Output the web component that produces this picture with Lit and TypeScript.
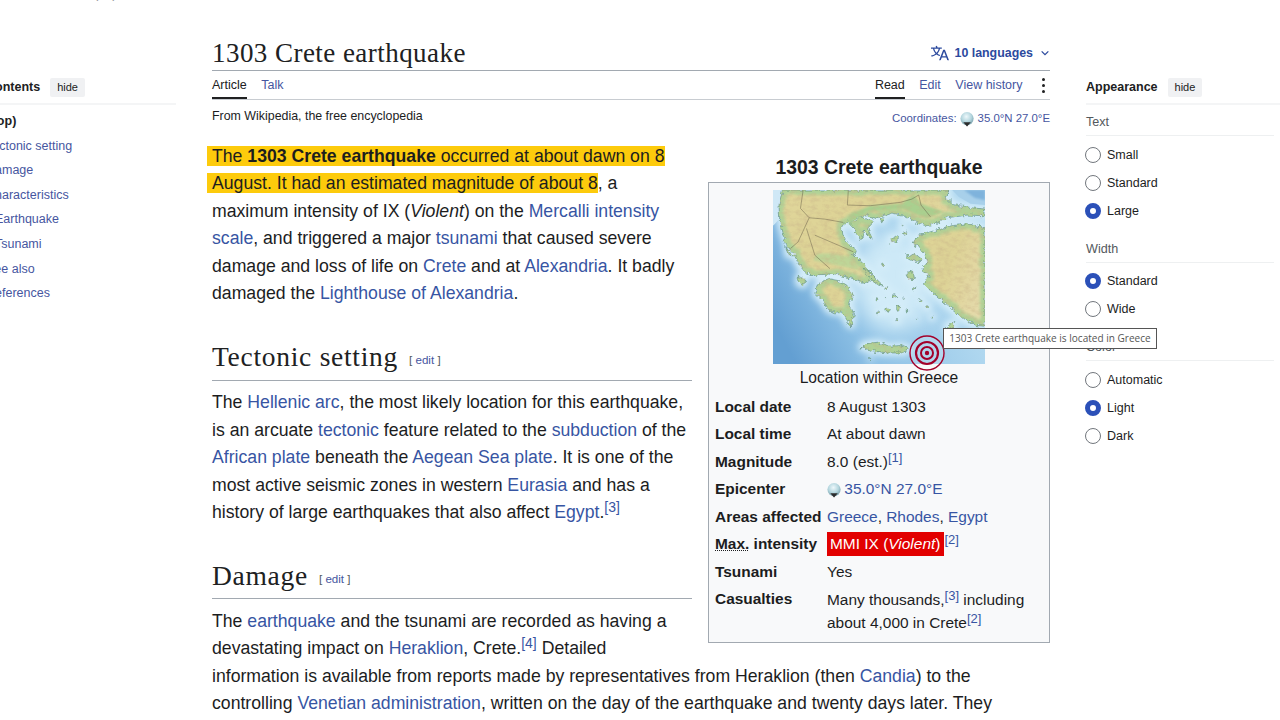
import { LitElement, html, css, svg } from "lit";
import { customElement } from "lit/decorators.js";

const radio = (label: string, on = false) => html`
  <div class="opt"><span class="radio ${on ? "on" : ""}"></span><span>${label}</span></div>`;

const globe = html`<svg class="globe" viewBox="0 0 16 16" width="15" height="15">
  <defs><radialGradient id="gl" cx="45%" cy="35%" r="65%"><stop offset="0" stop-color="#eef8fb"/><stop offset=".6" stop-color="#b4d6de"/><stop offset="1" stop-color="#7ba3ae"/></radialGradient></defs>
  <circle cx="7.5" cy="7" r="7" fill="url(#gl)"/>
  <path d="M3.5 11h8L7.5 15.5z" fill="#2c2c2c"/></svg>`;

const landPaths = svg`
  <path d="M38 15 L535 15 L524 36 L548 58 L600 68 L643 72 L643 92 L590 90 L530 98 L502 112 L470 122 L440 112 L420 102 L395 90 L365 84 L340 92 L318 100 L292 92 L262 96 L232 110 L216 122 L218 150 L236 176 L258 192 L250 212 L270 226 L284 240 L300 262 L318 278 L312 292 L300 286 L286 296 L258 282 L218 272 L178 266 L150 268 L128 272 L108 262 L88 240 L76 214 L52 184 L42 150 L30 106 L28 60 Z"/>
  <path d="M236 114 L272 96 L310 110 L296 126 L306 162 L282 138 L272 166 L256 136 Z"/>
  <path d="M148 292 L176 280 L206 286 L228 300 L252 332 L236 350 L250 382 L244 424 L226 396 L214 376 L196 382 L176 372 L160 346 L136 322 Z"/>
  <path d="M643 128 L590 116 L530 124 L490 138 L440 152 L426 176 L450 190 L464 208 L470 232 L454 256 L476 272 L462 296 L482 318 L510 340 L530 358 L552 376 L578 400 L614 420 L643 422 Z"/>
  <path d="M272 486 L290 474 L322 470 L350 482 L392 480 L416 488 L396 502 L350 502 L310 496 Z"/>
  <path d="M408 212 L432 204 L456 222 L440 232 L418 222 Z"/>
  <path d="M528 426 L546 410 L552 420 L534 442 Z"/>
  <path d="M408 264 L430 258 L432 282 L414 284 Z"/>
  <path d="M360 162 L382 154 L380 170 L362 172 Z"/>
  <path d="M278 246 L300 262 L340 302 L326 300 L296 276 Z"/>
  <path d="M86 272 L108 282 L100 302 L84 288 Z"/>
  <path d="M48 184 L64 210 L56 212 Z"/>
  <circle cx="338" cy="240" r="4"/><circle cx="348" cy="308" r="4"/><circle cx="372" cy="330" r="5"/><circle cx="385" cy="368" r="6"/><circle cx="352" cy="372" r="5"/>
  <circle cx="320" cy="340" r="3"/><circle cx="325" cy="380" r="3"/><circle cx="380" cy="405" r="3"/><circle cx="450" cy="345" r="3"/><circle cx="470" cy="365" r="4"/><circle cx="485" cy="395" r="3"/><circle cx="405" cy="145" r="5"/><circle cx="335" cy="106" r="5"/><circle cx="396" cy="120" r="3"/>
  <circle cx="300" cy="520" r="2"/><circle cx="440" cy="400" r="2"/><circle cx="410" cy="375" r="2"/><circle cx="345" cy="340" r="2"/><circle cx="430" cy="310" r="3"/><circle cx="400" cy="340" r="2"/>
`;

const mapSvg = svg`
  <defs>
    <linearGradient id="sea" x1="0" y1="0.75" x2="0.8" y2="0.4">
      <stop offset="0" stop-color="#639fd2"/><stop offset=".4" stop-color="#8fc2e6"/><stop offset="1" stop-color="#b2d9f0"/>
    </linearGradient>
    <linearGradient id="land" x1="0" y1="0" x2="1" y2="0.5">
      <stop offset="0" stop-color="#e9d79c"/><stop offset=".5" stop-color="#e6d496"/><stop offset="1" stop-color="#efdcae"/>
    </linearGradient>
    <filter id="halo" x="-10%" y="-10%" width="120%" height="120%"><feMorphology operator="dilate" radius="9"/><feGaussianBlur stdDeviation="9"/></filter>
    <filter id="soft"><feGaussianBlur stdDeviation="3"/></filter>
    <filter id="wide" x="-30%" y="-30%" width="160%" height="160%"><feGaussianBlur stdDeviation="28"/></filter>
    <filter id="rough" x="-5%" y="-5%" width="110%" height="110%">
      <feTurbulence type="fractalNoise" baseFrequency=".08" numOctaves="3" seed="7" result="n"/>
      <feDisplacementMap in="SourceGraphic" in2="n" scale="18" xChannelSelector="R" yChannelSelector="G"/>
    </filter>
    <filter id="inner" x="-5%" y="-5%" width="110%" height="110%">
      <feTurbulence type="fractalNoise" baseFrequency=".08" numOctaves="3" seed="7" result="n"/>
      <feDisplacementMap in="SourceGraphic" in2="n" scale="18" xChannelSelector="R" yChannelSelector="G"/>
      <feMorphology operator="erode" radius="11"/><feGaussianBlur stdDeviation="5"/>
    </filter>
    <filter id="relief" x="0" y="0" width="100%" height="100%">
      <feTurbulence type="fractalNoise" baseFrequency=".05 .08" numOctaves="4" seed="3"/>
      <feColorMatrix values="0 0 0 0 .58  0 0 0 0 .45  0 0 0 0 .25  2.2 0 0 0 -.9"/>
    </filter>
    <clipPath id="landclip">${landPaths}</clipPath>
  </defs>
  <rect x="10" y="15" width="633" height="520" fill="url(#sea)"/>
  <ellipse cx="370" cy="290" rx="120" ry="150" fill="#cde9f7" filter="url(#wide)"/>
  <g fill="#d6eef9" filter="url(#halo)">${landPaths}</g>
  <path d="M10 15 L40 15 L28 60 L30 100 L12 120 L10 120 Z" fill="#cfe8f6"/>
  <path d="M545 15 L643 15 L643 60 L600 56 L565 36 Z" fill="#a8d0ea"/>
  <path d="M580 15 L643 15 L643 46 L612 38 Z" fill="#7fb3dc" filter="url(#soft)"/>
  <g fill="#afd296" stroke="#4b7d78" stroke-width="1.6" filter="url(#rough)">${landPaths}</g>
  <g fill="url(#land)" filter="url(#inner)" opacity=".85">${landPaths}</g>
  <path d="M235 118 L290 80 L400 72 L440 90 L470 100 L520 80 L450 55 L430 28 L395 55 L300 62 L240 88 Z" fill="#a9d08f" filter="url(#soft)"/>
  <path d="M130 225 L200 240 L270 255 L240 215 L190 205 L140 205 Z" fill="#b7d698" opacity=".8" filter="url(#soft)"/>
  <rect x="10" y="15" width="633" height="520" filter="url(#relief)" clip-path="url(#landclip)" opacity=".45"/>
  <g fill="none" stroke="#5f5644" stroke-width="1.7" opacity=".8">
    <path d="M100 15 L92 70 L118 98 L165 102 L220 112"/>
    <path d="M235 15 L232 60 L300 62 L390 52 L425 42"/>
    <path d="M425 42 L445 30 L452 60 L480 95"/>
    <path d="M118 98 L85 170 L62 190"/>
    <path d="M110 130 L135 210 L180 250"/>
    <path d="M135 150 L205 180 L250 200"/>
  </g>
`;

@customElement("app-root")
export class AppRoot extends LitElement {
  static styles = css`
    :host { display: block; width: 1280px; height: 720px; overflow: hidden; background: #fff; position: relative; font-family: "Liberation Sans", Arial, sans-serif; color: #1c1d1e; }
    a { color: #3755a3; text-decoration: none; }
    .page { display: flex; height: 720px; }
    .toc { width: 212px; flex: none; overflow: hidden; font-size: 12.5px; }
    .tocin { margin-left: -14px; width: 190px; padding-top: 77px; }
    .sidehead { display: flex; align-items: center; gap: 10px; height: 20px; font-weight: 700; font-size: 12.5px; color: #202122; }
    .hide { font-weight: 400; font-size: 11px; background: #f0f1f3; border-radius: 2px; padding: 0 7px; height: 19px; line-height: 19px; }
    .tocrule { height: 2px; background: #f4f5f6; margin-top: 6px; margin-bottom: 4px; }
    .tocitem { height: 24.6px; line-height: 24.6px; white-space: nowrap; color: #46569f; }
    .tocitem.top { font-weight: 700; color: #202122; }
    .tocitem.subitem { padding-left: 9px; }
    .main { width: 838px; flex: none; padding-top: 38px; }
    .titlebar { display: flex; justify-content: space-between; align-items: center; height: 32px; border-bottom: 1px solid #a2a9b1; }
    h1 { margin: 0; padding-bottom: 3px; font: 400 27px/32px "Liberation Serif", serif; letter-spacing: .45px; color: #202122; }
    .lang { display: flex; align-items: center; gap: 5px; color: #2c4a9e; font-size: 12.4px; font-weight: 700; padding-bottom: 2px; }
    .tabs { display: flex; justify-content: space-between; height: 28px; border-bottom: 1px solid #c8ccd1; font-size: 12.5px; }
    .tabgroup { display: flex; gap: 14.5px; align-items: stretch; }
    .tab { display: block; line-height: 28px; height: 28px; box-sizing: border-box; color: #46569f; }
    .tab.sel { color: #202122; border-bottom: 2px solid #202122; }
    .dots { display: flex; flex-direction: column; justify-content: center; gap: 3px; margin: 0 5px 0 5px; }
    .dots i { width: 3px; height: 3px; border-radius: 50%; background: #202122; }
    .sub { display: flex; justify-content: space-between; height: 43px; padding-top: 9px; box-sizing: border-box; font-size: 12.4px; }
    .coord { display: flex; align-items: flex-start; gap: 3px; color: #46569f; font-size: 11.4px; padding-top: 3px; }
    .coord .globe { margin-top: 0; }
    .body { font-size: 17.67px; line-height: 27.4px; }
    p { margin: 0; }
    p sup { font-size: 14px; vertical-align: 6.5px; }
    .hl { background: #fdcb0c; padding-left: 5px; margin-left: -5px; -webkit-box-decoration-break: clone; box-decoration-break: clone; }
    h2 { font: 400 27.5px/36px "Liberation Serif", serif; letter-spacing: .72px; margin: 0; padding-bottom: 4.5px; border-bottom: 1px solid #a2a9b1; display: flow-root; color: #202122; }
    h2 small { font: 400 11.6px "Liberation Sans", sans-serif; letter-spacing: 0; margin-left: 11px; color: #54595d; vertical-align: 2px; }
    h2 small a { color: #46569f; }
    .sec1 { margin-top: 32px; margin-bottom: 8.5px; }
    .sec2 { margin-top: 31.5px; margin-bottom: 8.5px; }
    sup { font-size: 13px; line-height: 0; vertical-align: 5px; color: #3755a3; }
    .info { float: right; width: 342px; margin: 7px 0 0 16px; position: relative; font-size: 15.45px; }
    .infotitle { text-align: center; font-weight: 700; font-size: 19.4px; line-height: 24px; padding-top: 5px; height: 30px; box-sizing: border-box; margin-bottom: 2px; }
    .ibox { border: 1px solid #a2a9b1; background: #f8f9fa; height: 461px; box-sizing: border-box; padding-top: 7px; }
    .mapwrap { position: relative; width: 212px; height: 174px; margin-left: 64px; }
    .mapwrap svg.map { display: block; width: 212px; height: 174px; }
    .target { position: absolute; left: 136px; top: 145px; width: 36px; height: 36px; }
    .cap { text-align: center; font-size: 15.6px; line-height: 20px; margin-top: 4px; }
    .rows { display: grid; grid-template-columns: 112px 1fr; padding: 4.5px 0 0 6px; line-height: 27.55px; }
    .rows b { font-weight: 700; white-space: nowrap; }
    .rows .globe { vertical-align: -4px; margin-right: -2px; }
    .rows .dotted { text-decoration: underline dotted 1px; text-underline-offset: 1px; }
    .mmi { background: #e20000; color: #fff; padding: 3px 4px 4px 3px; }
    .two { line-height: 23px; padding-top: 3px; padding-right: 10px; }
    .right { margin-left: 36px; width: 194px; flex: none; font-size: 12.5px; padding-top: 77px; }
    .rule { height: 2px; background: #f4f5f6; margin-top: 6px; }
    .grp { color: #54595d; font-size: 12.6px; line-height: 18px; padding-top: 8px; padding-bottom: 4px; border-bottom: 1px solid #eef0f1; margin-right: 6px; margin-bottom: 4.5px; }
    .opt { display: flex; align-items: center; gap: 6px; height: 28.2px; }
    .radio { width: 16px; height: 16px; border-radius: 50%; border: 1px solid #72777d; box-sizing: border-box; background: #fff; margin-left: -1px; }
    .radio.on { border: 5px solid #2b50b8; }
    .gap { height: 6.5px; }
    .tip { position: absolute; left: 943px; top: 328px; width: 214px; height: 21px; box-sizing: border-box; border: 1px solid #555; background: #fff; font: 400 10.05px/19px "Open Sans", sans-serif; color: #555; text-align: center; white-space: nowrap; }
    .topcut { position: absolute; left: 0; top: -13px; font-size: 12.4px; line-height: 14px; color: #8a8d90; white-space: nowrap; }
    .nextline { text-align: right; padding-right: 15px; }
  `;

  render() {
    return html`
      <div class="topcut">Tal, contribute to (an)</div>
      <div class="page">
        <nav class="toc">
          <div class="tocin">
            <div class="sidehead"><span>Contents</span><span class="hide">hide</span></div>
            <div class="tocrule"></div>
            <div class="tocitem top">(Top)</div>
            <div class="tocitem">Tectonic setting</div>
            <div class="tocitem">Damage</div>
            <div class="tocitem">Characteristics</div>
            <div class="tocitem subitem">Earthquake</div>
            <div class="tocitem subitem">Tsunami</div>
            <div class="tocitem">See also</div>
            <div class="tocitem">References</div>
          </div>
        </nav>
        <main class="main">
          <div class="titlebar">
            <h1>1303 Crete earthquake</h1>
            <div class="lang">
              <svg width="18" height="18" viewBox="0 0 20 20" fill="#2c4a9e"><path d="M20 18h-1.44a.6.6 0 0 1-.4-.12.8.8 0 0 1-.23-.31L17 15h-5l-1 2.54a.8.8 0 0 1-.22.3.6.6 0 0 1-.4.14H9l4.55-11.47h1.89zm-3.53-4.31L14.89 9.5a12 12 0 0 1-.39-1.24q-.09.37-.19.69l-.19.56-1.58 4.19zm-6.3-1.58a13.4 13.4 0 0 1-2.91-1.41 11.46 11.46 0 0 0 2.81-5.37H12V4H7.31a4 4 0 0 0-.2-.56C6.87 2.79 6.6 2 6.6 2l-1.47.5s.4.89.6 1.5H0v1.33h2.15A11.23 11.23 0 0 0 5 10.7a17.2 17.2 0 0 1-5 2.1q.56.82.87 1.38a23.3 23.3 0 0 0 5.22-2.51 15.6 15.6 0 0 0 3.56 1.77zM3.63 5.33h4.91a8.1 8.1 0 0 1-2.45 4.45 9.1 9.1 0 0 1-2.46-4.45"/></svg>
              <span>10 languages</span>
              <svg width="10" height="10" viewBox="0 0 12 12" fill="none" stroke="#2c4a9e" stroke-width="1.5" style="margin:0 0 0 2px"><path d="M2 4l4 4 4-4"/></svg>
            </div>
          </div>
          <div class="tabs">
            <div class="tabgroup"><a class="tab sel">Article</a><a class="tab">Talk</a></div>
            <div class="tabgroup"><a class="tab sel">Read</a><a class="tab">Edit</a><a class="tab">View history</a><span class="dots"><i></i><i></i><i></i></span></div>
          </div>
          <div class="sub"><span>From Wikipedia, the free encyclopedia</span>
            <span class="coord">Coordinates: ${globe} 35.0°N 27.0°E</span></div>
          <div class="body">
            <aside class="info">
              <div class="infotitle">1303 Crete earthquake</div>
              <div class="ibox">
                <div class="mapwrap">
                  <svg class="map" viewBox="10 15 633 520" preserveAspectRatio="none">${mapSvg}</svg>
                  <svg class="target" viewBox="0 0 36 36" fill="none" stroke="#a3002a">
                    <circle cx="18" cy="18" r="17" fill="#fff" fill-opacity=".18" stroke-width="1.4"/>
                    <circle cx="18" cy="18" r="11" stroke-width="2.2"/><circle cx="18" cy="18" r="6" stroke-width="2"/><circle cx="18" cy="18" r="2.2" fill="#a3002a" stroke="none"/>
                  </svg>
                </div>
                <div class="cap">Location within Greece</div>
                <div class="rows">
                  <b>Local date</b><span>8 August 1303</span>
                  <b>Local time</b><span>At about dawn</span>
                  <b>Magnitude</b><span>8.0 (est.)<sup>[1]</sup></span>
                  <b>Epicenter</b><span>${globe} <a>35.0°N 27.0°E</a></span>
                  <b>Areas affected</b><span><a>Greece</a>, <a>Rhodes</a>, <a>Egypt</a></span>
                  <b><span class="dotted">Max.</span> intensity</b><span><span class="mmi">MMI IX (<i>Violent</i>)</span><sup>[2]</sup></span>
                  <b>Tsunami</b><span>Yes</span>
                  <b>Casualties</b><span class="two">Many thousands,<sup>[3]</sup> including about 4,000 in Crete<sup>[2]</sup></span>
                </div>
              </div>
            </aside>
            <p><span class="hl">The <b>1303 Crete earthquake</b> occurred at about dawn on 8 August. It had an estimated magnitude of about 8</span>, a maximum intensity of IX (<i>Violent</i>) on the <a>Mercalli intensity scale</a>, and triggered a major <a>tsunami</a> that caused severe damage and loss of life on <a>Crete</a> and at <a>Alexandria</a>. It badly damaged the <a>Lighthouse of Alexandria</a>.</p>
            <h2 class="sec1">Tectonic setting<small>[ <a>edit</a> ]</small></h2>
            <p>The <a>Hellenic arc</a>, the most likely location for this earthquake, is an arcuate <a>tectonic</a> feature related to the <a>subduction</a> of the <a>African plate</a> beneath the <a>Aegean Sea plate</a>. It is one of the most active seismic zones in western <a>Eurasia</a> and has a history of large earthquakes that also affect <a>Egypt</a>.<sup>[3]</sup></p>
            <h2 class="sec2">Damage<small>[ <a>edit</a> ]</small></h2>
            <p>The <a>earthquake</a> and the tsunami are recorded as having a devastating impact on <a>Heraklion</a>, Crete.<sup>[4]</sup> Detailed information is available from reports made by representatives from Heraklion (then <a>Candia</a>) to the controlling <a>Venetian administration</a>, written on the day of the earthquake and twenty days later. They</p>
            <div class="nextline"><sup>[5]</sup></div>
          </div>
        </main>
        <aside class="right">
          <div class="sidehead"><span>Appearance</span><span class="hide">hide</span></div>
          <div class="rule"></div>
          <div class="grp">Text</div>
          ${radio("Small")}${radio("Standard")}${radio("Large", true)}
          <div class="gap"></div>
          <div class="grp">Width</div>
          ${radio("Standard", true)}${radio("Wide")}
          <div class="gap"></div>
          <div class="grp">Color</div>
          ${radio("Automatic")}${radio("Light", true)}${radio("Dark")}
        </aside>
      </div>
      <div class="tip">1303 Crete earthquake is located in Greece</div>
    `;
  }
}
